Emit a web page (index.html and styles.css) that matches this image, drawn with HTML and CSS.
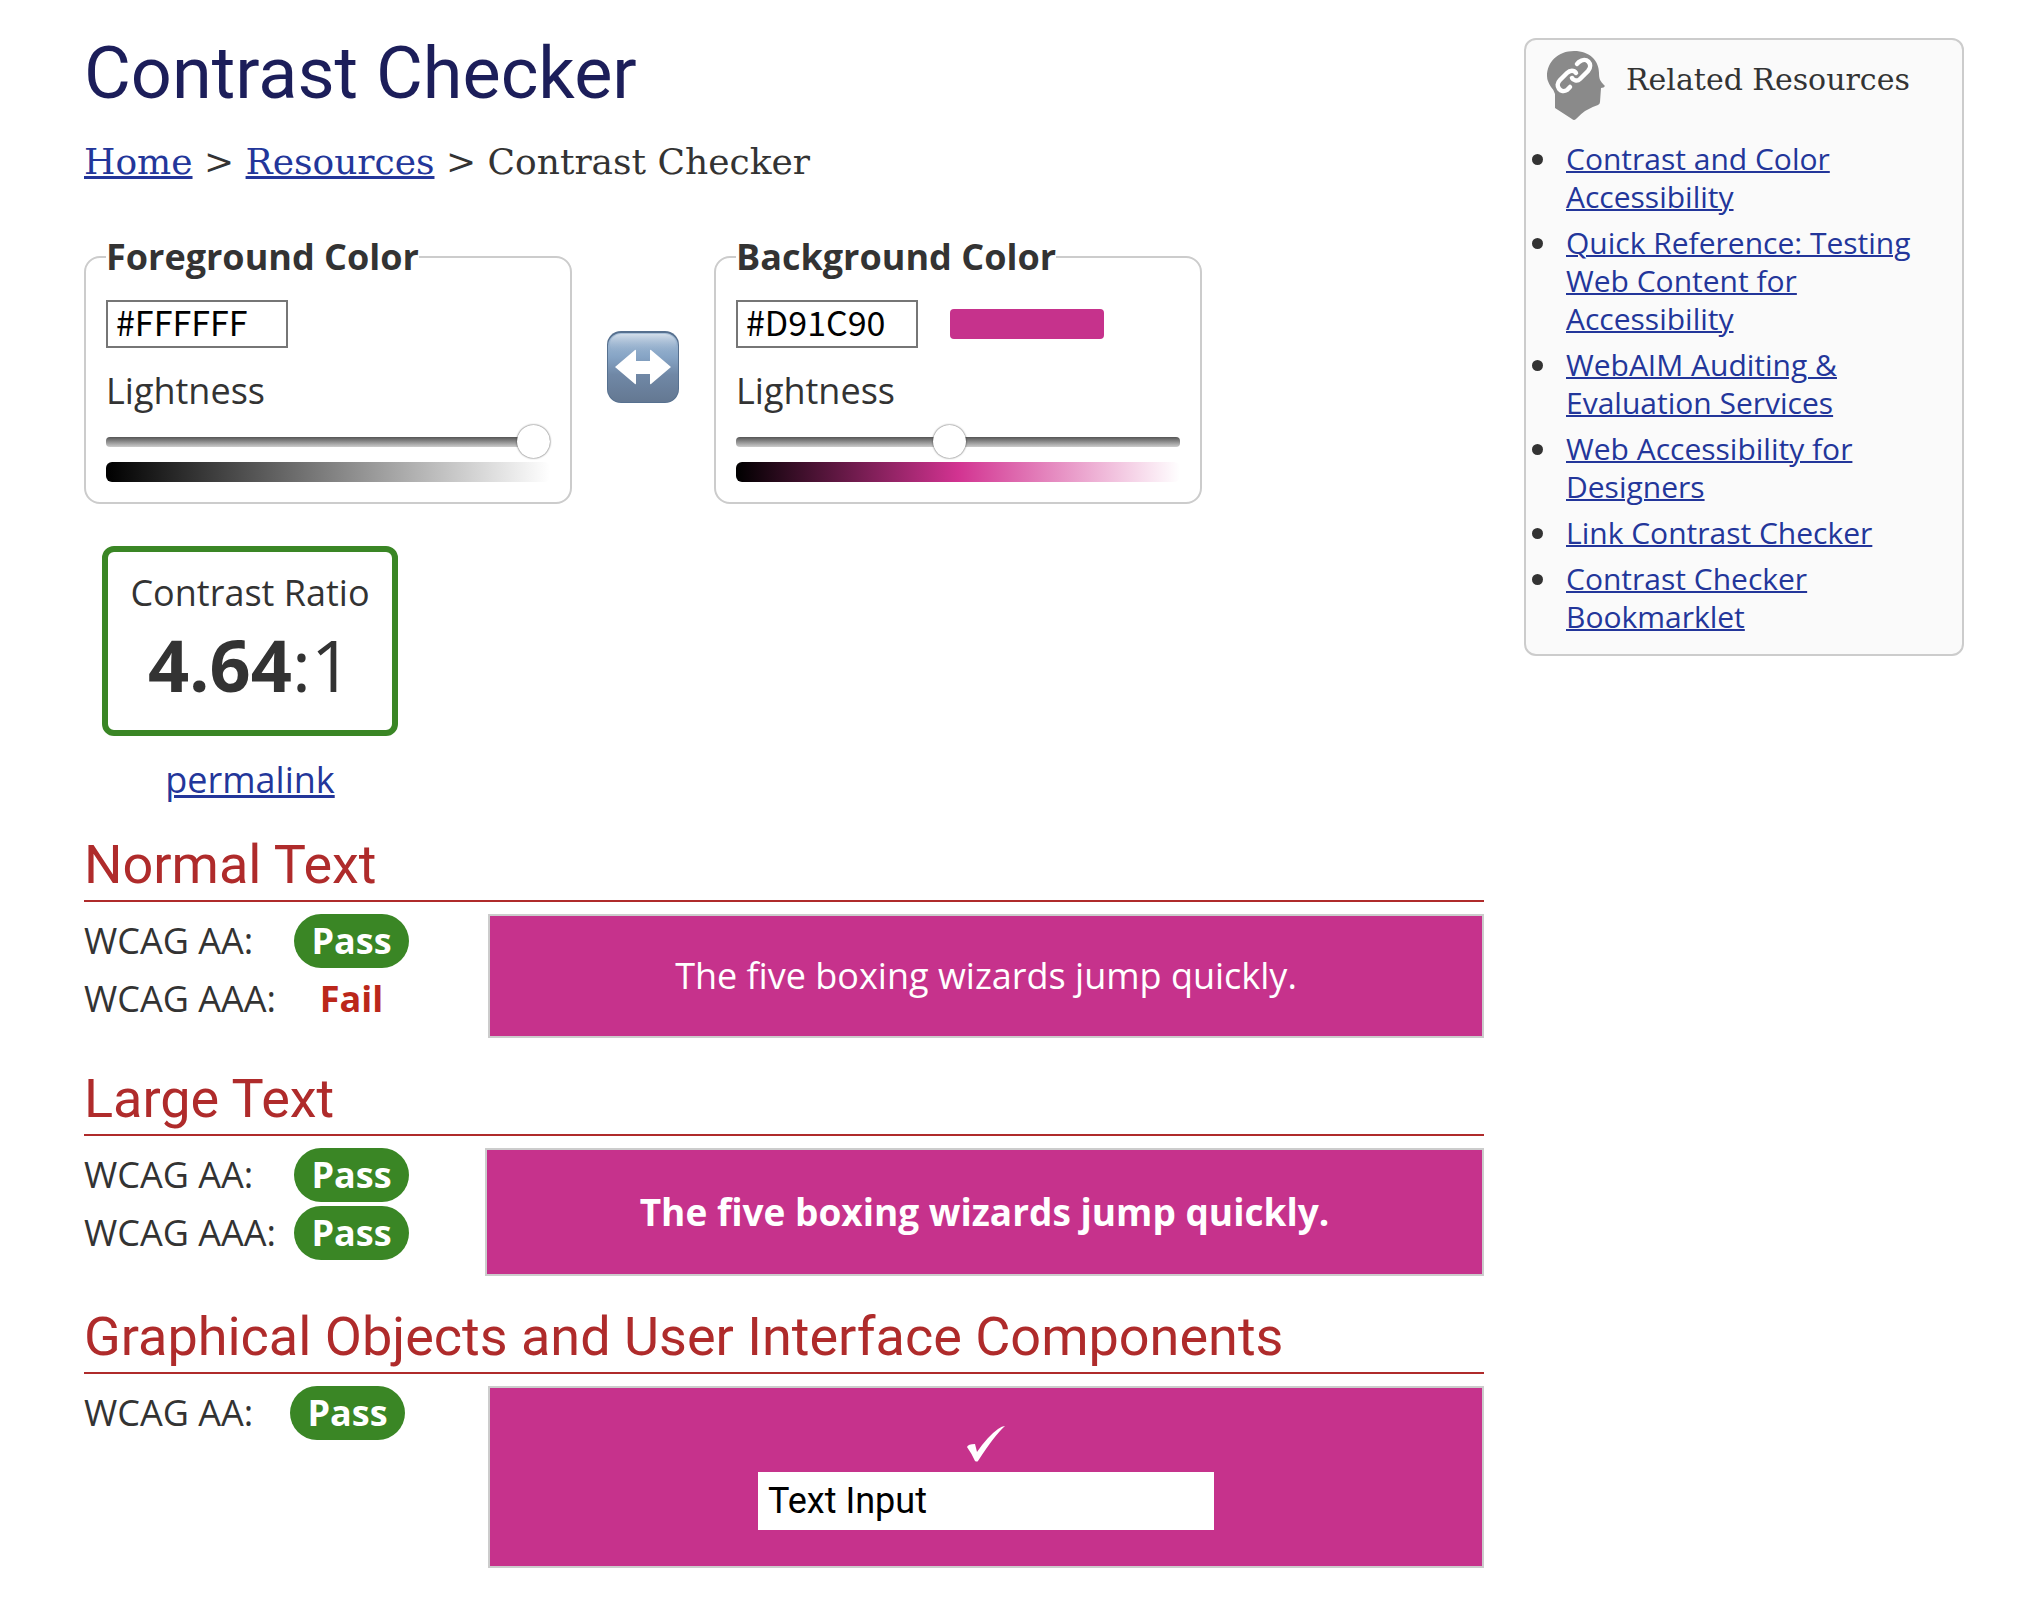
FILE: index.html
```html
<!DOCTYPE html>
<html lang="en">
<head>
<meta charset="utf-8">
<meta name="viewport" content="width=device-width, initial-scale=1">
<title>Contrast Checker</title>
<link rel="stylesheet" href="styles.css">
</head>
<body>
<div class="page">
  <main class="main">
    <h1 class="title">Contrast Checker</h1>
    <nav class="crumbs" aria-label="Breadcrumb"><a href="#home">Home</a> &gt; <a href="#resources">Resources</a> &gt; Contrast Checker</nav>

    <form class="pickers">
      <fieldset class="picker">
        <legend>Foreground Color</legend>
        <div class="picker-row">
          <input class="hex" type="text" value="#FFFFFF" aria-label="Foreground hex value">
          <span class="swatch swatch-fg"></span>
        </div>
        <label class="lightness" for="fg-light">Lightness</label>
        <input class="slider" id="fg-light" type="range" min="0" max="100" value="100">
        <div class="ramp ramp-fg"></div>
      </fieldset>
      <button class="swap" type="button" aria-label="Swap colors">
        <svg viewBox="0 0 72 72" width="72" height="72" aria-hidden="true">
          <defs>
            <linearGradient id="key" x1="0" y1="0" x2="0" y2="1">
              <stop offset="0" stop-color="#a9c0d8"/>
              <stop offset=".35" stop-color="#86a4c5"/>
              <stop offset=".6" stop-color="#7088a6"/>
              <stop offset="1" stop-color="#647892"/>
            </linearGradient>
            <linearGradient id="shine" x1="0" y1="0" x2="0" y2="1">
              <stop offset="0" stop-color="#d3deea"/>
              <stop offset="1" stop-color="#86a4c5" stop-opacity="0"/>
            </linearGradient>
          </defs>
          <rect width="72" height="72" rx="14" fill="#56708f"/>
          <rect x="1" y="2" width="70" height="69" rx="13" fill="url(#key)"/>
          <rect x="3" y="3" width="66" height="20" rx="11" fill="url(#shine)"/>
          <path d="M8 36 28 19q1-1 1 1V30H43V20q0-2 1-1L64 36 44 53q-1 1-1-1V43H29V52q0 2-1 1Z" fill="#fff"/>
        </svg>
      </button>
      <fieldset class="picker">
        <legend>Background Color</legend>
        <div class="picker-row">
          <input class="hex" type="text" value="#D91C90" aria-label="Background hex value">
          <span class="swatch swatch-bg"></span>
        </div>
        <label class="lightness" for="bg-light">Lightness</label>
        <input class="slider" id="bg-light" type="range" min="0" max="100" value="48">
        <div class="ramp ramp-bg"></div>
      </fieldset>
    </form>

    <div class="result">
      <div class="ratio">
        <div class="ratio-label">Contrast Ratio</div>
        <div class="ratio-value"><b>4.64</b>:1</div>
      </div>
      <a href="#permalink">permalink</a>
    </div>

    <section class="level">
      <h2>Normal Text</h2>
      <div class="level-body">
        <dl class="checks">
          <dt>WCAG AA:</dt><dd><span class="pass">Pass</span></dd>
          <dt>WCAG AAA:</dt><dd><span class="fail">Fail</span></dd>
        </dl>
        <div class="sample sample-normal">The five boxing wizards jump quickly.</div>
      </div>
    </section>

    <section class="level">
      <h2>Large Text</h2>
      <div class="level-body">
        <dl class="checks">
          <dt>WCAG AA:</dt><dd><span class="pass">Pass</span></dd>
          <dt>WCAG AAA:</dt><dd><span class="pass">Pass</span></dd>
        </dl>
        <div class="sample sample-large">The five boxing wizards jump quickly.</div>
      </div>
    </section>

    <section class="level">
      <h2>Graphical Objects and User Interface Components</h2>
      <div class="level-body">
        <dl class="checks checks-ui">
          <dt>WCAG AA:</dt><dd><span class="pass">Pass</span></dd>
        </dl>
        <div class="sample sample-ui">
          <svg class="tick" viewBox="0 0 38 36" width="38" height="36" aria-hidden="true"><path d="M0 21Q1 18 8 18L10 26Q21 10 31 3Q35 0 38 0Q27 10 11 35Q10 36 8 35Q5 28 0 21Z" fill="#fff"/></svg>
          <input class="demo" type="text" value="Text Input" aria-label="Sample text input">
        </div>
      </div>
    </section>
  </main>

  <aside class="related">
    <div class="related-head">
      <svg viewBox="0 0 58 69" width="58" height="69" aria-hidden="true">
        <path d="M27 0C43 0 52 10 52 22C52 28 53 30 58 35Q57 37 54 37L53 51Q53 53 51 54Q38 58 29 68Q27 70 25 68L8 57V43Q7 39 4 36Q0 30 0 25C0 11 11 0 27 0Z" fill="#8a8a8a"/>
        <g fill="none" stroke="#fff" stroke-width="4.5" stroke-linecap="round">
          <path d="M30 13 32 11C39 5 47 13 41 20L33 28C30 31 26 29 25 27"/>
          <path d="M29 22C27 19 23 19 20 22L13 29C7 35 14 43 20 39L23 36"/>
        </g>
      </svg>
      <h2>Related Resources</h2>
    </div>
    <ul>
      <li><a href="#color">Contrast and Color Accessibility</a></li>
      <li><a href="#quickref">Quick Reference: Testing Web Content for Accessibility</a></li>
      <li><a href="#services">WebAIM Auditing &amp; Evaluation Services</a></li>
      <li><a href="#designers">Web Accessibility for Designers</a></li>
      <li><a href="#linkchecker">Link Contrast Checker</a></li>
      <li><a href="#bookmarklet">Contrast Checker Bookmarklet</a></li>
    </ul>
  </aside>
</div>
</body>
</html>
```
FILE: styles.css
```css
* { box-sizing: border-box; }

body {
  margin: 0;
  background: #fff;
  color: #333;
  font: 36px/54px "Open Sans", "Noto Sans", sans-serif;
}

a { color: #23369a; text-decoration-thickness: 2px; }

.page {
  display: grid;
  grid-template-columns: minmax(0, 1fr) 440px;
  align-items: start;
  gap: 40px;
  padding: 38px 55px 40px 84px;
}

.title {
  margin: 0;
  color: #1c1e5a;
  font: 400 72px/72px Roboto, sans-serif;
}

.crumbs {
  margin-top: 25px;
  font: 36px/54px "DejaVu Serif", serif;
}
.crumbs a { text-decoration-thickness: 3px; }

/* Color pickers */
.pickers {
  display: flex;
  align-items: center;
  gap: 35px;
  margin-top: 41px;
}

.picker {
  width: 488px;
  min-width: 0;
  margin: 0;
  padding: 16px 20px 20px;
  border: 2px solid #ccc;
  border-radius: 16px;
}
.picker legend { padding: 0; font-weight: 700; }

.picker-row {
  display: flex;
  align-items: center;
  gap: 32px;
}

.hex {
  width: 182px;
  height: 48px;
  padding: 0 8px 6px;
  border: 2px solid #767676;
  background: #fff;
  color: #000;
  font: 34px/38px "Noto Sans CJK SC", sans-serif;
}

.swatch { width: 154px; height: 30px; border-radius: 4px; }
.swatch-fg { background: #fff; }
.swatch-bg { background: #c6328c; }

.lightness { display: block; margin-top: 16px; }

.slider {
  display: block;
  width: 100%;
  height: 32px;
  margin: 8px 0 0;
  appearance: none;
  background: none;
}
.slider::-webkit-slider-runnable-track {
  height: 10px;
  border-radius: 4px;
  background: linear-gradient(#555, #ccc);
}
.slider::-webkit-slider-thumb {
  width: 33px;
  height: 33px;
  margin-top: -12px;
  appearance: none;
  border-radius: 50%;
  background: #fff;
  box-shadow: 0 0 2px #333;
}

.ramp { height: 20px; margin-top: 4px; border-radius: 6px; }
.ramp-fg { background: linear-gradient(to right, #000, #fff); }
.ramp-bg { background: linear-gradient(to right, #000, #d23391 50%, #fff); }

.swap {
  width: 72px;
  height: 72px;
  padding: 0;
  border: 0;
  background: none;
}
.swap svg { display: block; }

/* Ratio */
.result {
  width: 296px;
  margin: 42px 0 0 18px;
  line-height: 48px;
  text-align: center;
}
.ratio {
  height: 190px;
  margin-bottom: 20px;
  padding: 14px 0;
  border: 6px solid #3a8625;
  border-radius: 12px;
}
.ratio-label { line-height: 54px; }
.ratio-value { font-size: 72px; line-height: 88px; }
.result a { text-decoration-thickness: 3px; }

/* Conformance levels */
.level { margin-top: 30px; }
.level h2 {
  margin: 0 0 12px;
  padding-bottom: 4px;
  border-bottom: 2px solid #af2b2b;
  color: #af2b2b;
  font: 400 54px/62px Roboto, sans-serif;
}
.level-body {
  display: grid;
  grid-template-columns: 404px minmax(0, 1fr);
  align-items: start;
}

.checks {
  display: grid;
  grid-template-columns: 210px 115px;
  row-gap: 4px;
  margin: 0;
}
.checks-ui { grid-template-columns: 206px 115px; }
.checks dt { white-space: nowrap; }
.checks dd { margin: 0; font-weight: 700; }
.pass {
  display: block;
  border-radius: 27px;
  background: #3a8625;
  color: #fff;
  text-align: center;
}
.fail { display: block; color: #bb271a; text-align: center; }

.sample {
  border: 2px solid #ccc;
  background: #c6328c;
  color: #fff;
  text-align: center;
}
.sample-normal { padding: 33px 20px; }
.sample-large {
  margin-left: -3px;
  padding: 35px 20px;
  font-size: 37px;
  font-weight: 700;
}
.sample-ui {
  display: flex;
  flex-direction: column;
  align-items: center;
  gap: 10px;
  padding: 38px 20px 36px;
}
.tick { display: block; }
.demo {
  width: 456px;
  max-width: 100%;
  height: 58px;
  padding: 0 10px;
  border: 0;
  background: #fff;
  color: #000;
  font: 36px/54px Roboto, sans-serif;
}

/* Sidebar */
.related {
  padding: 11px 20px 10px 21px;
  border: 2px solid #ccc;
  border-radius: 12px;
  background: #fafafa;
  font-size: 30px;
  line-height: 38px;
}
.related-head { display: flex; gap: 21px; }
.related h2 {
  margin: 8px 0 0;
  font: 400 30px/42px "DejaVu Serif", serif;
  white-space: nowrap;
}
.related ul { margin: 20px 0 0; padding-left: 13px; }
.related li { margin-bottom: 8px; padding-left: 6px; }
```
